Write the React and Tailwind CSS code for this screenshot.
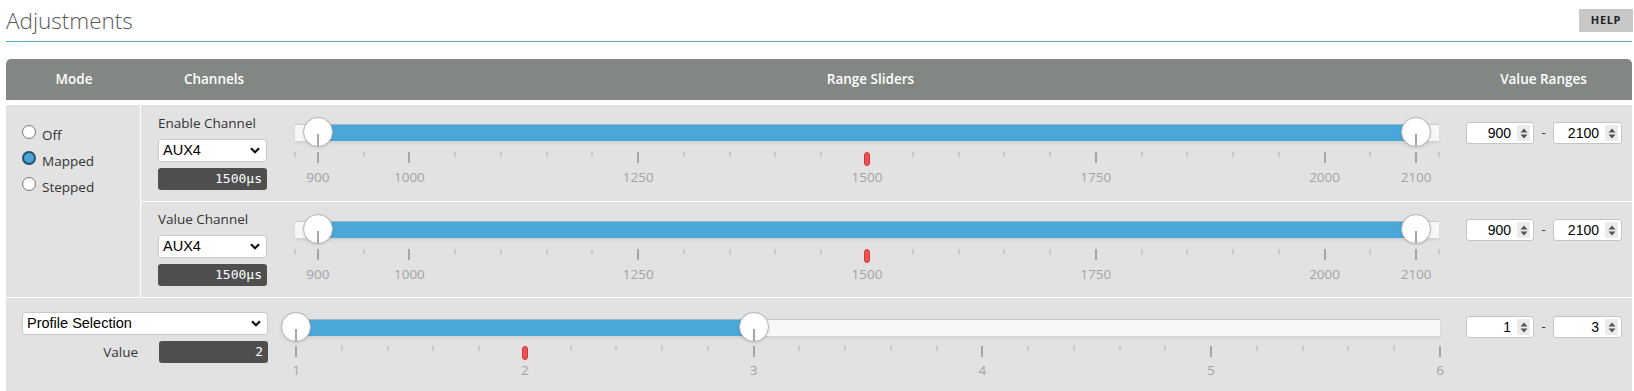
import React from 'react'

function range(n, f) {
  return Array.from({ length: n }, (_, i) => f(i))
}

// pulse-range slider, 875..2125 with pips every 50
const pulseTicks = [875, ...range(25, i => 900 + i * 50), 2125].map(v => ({
  v,
  major: [900, 1000, 1250, 1500, 1750, 2000, 2100].includes(v),
}))
const pulseLabels = [900, 1000, 1250, 1500, 1750, 2000, 2100]

const profileTicks = range(26, i => ({ v: 1 + i * 0.2, major: i % 5 === 0 }))
const profileLabels = [1, 2, 3, 4, 5, 6]

function Chevron() {
  return (
    <svg width="10" height="7" viewBox="0 0 10 7" className="shrink-0">
      <path d="M1 1.2 L5 5.2 L9 1.2" fill="none" stroke="#111" strokeWidth="2.2" />
    </svg>
  )
}

function Select({ value, width }) {
  return (
    <div
      className={`${width} h-[23px] bg-white border border-[#c8c8c8] rounded-[3px] flex items-center justify-between pl-[4px] pr-[6px] text-[14.5px] text-black font-['Liberation_Sans',Arial,sans-serif]`}
    >
      <span>{value}</span>
      <Chevron />
    </div>
  )
}

function ValueBox({ children }) {
  return (
    <div className="w-[109px] h-[22px] bg-[#4f4f4f] rounded-[3px] flex items-center justify-end pr-[5px] text-white text-[13px] font-['DejaVu_Sans_Mono','Liberation_Mono',monospace]">
      {children}
    </div>
  )
}

function NumberInput({ value, width }) {
  return (
    <div
      className={`${width} h-[22px] bg-white border border-[#c4c4c4] rounded-[3px] flex items-center justify-end pr-[3px] text-[14px] text-black font-['Liberation_Sans',Arial,sans-serif]`}
    >
      <span>{value}</span>
      <div className="ml-[6px] w-[13px] h-[16px] bg-[#ebebeb] flex items-center justify-center">
        <svg width="8" height="11" viewBox="0 0 8 11">
          <path d="M4 0.5 L7.5 4.5 L0.5 4.5 Z" fill="#555" />
          <path d="M4 10.5 L7.5 6.5 L0.5 6.5 Z" fill="#555" />
        </svg>
      </div>
    </div>
  )
}

function ValueRanges({ low, high, top }) {
  return (
    <div className={`w-[177px] pl-[11px] ${top} flex items-start`}>
      <div className="flex items-center">
        <NumberInput value={low} width="w-[68px]" />
        <span className="w-[19px] text-center text-[13px] text-[#333]">-</span>
        <NumberInput value={high} width="w-[69px]" />
      </div>
    </div>
  )
}

function Slider({ min, max, low, high, ticks, labels, marker, tickTop, labelTop }) {
  const pct = v => ((v - min) / (max - min)) * 100
  return (
    <div className="relative w-[1144px] h-[70px]">
      <div className="absolute left-0 right-0 top-0 h-[17px] bg-[#f7f7f7] border-t border-[#c9c9c9] shadow-[0_2px_3px_rgba(0,0,0,0.08)]" />
      <div
        className="absolute top-0 h-[17px] bg-[#4ba6d9] border-t border-[#9bb8c8]"
        style={{ left: `${pct(low)}%`, width: `${pct(high) - pct(low)}%` }}
      />
      {ticks.map(t =>
        Math.abs(t.v - marker) < 0.001 ? null : (
          <div
            key={t.v}
            className={`absolute ${tickTop} w-[2px] -ml-[1px] ${t.major ? 'h-[11px] bg-[#a6a6a6]' : 'h-[5px] bg-[#c9c9c9]'}`}
            style={{ left: `${pct(t.v)}%` }}
          />
        )
      )}
      <div
        className={`absolute ${tickTop} w-[6px] h-[14px] -ml-[3px] rounded-full bg-[#ec5050] border border-[#d43c3c]`}
        style={{ left: `${pct(marker)}%` }}
      />
      {labels.map(l => (
        <div
          key={l}
          className={`absolute ${labelTop} -translate-x-1/2 text-[13.5px] leading-[16px] text-[#a3a3a3]`}
          style={{ left: `${pct(l)}%` }}
        >
          {l}
        </div>
      ))}
      {[low, high].map((v, i) => (
        <div
          key={i}
          className="absolute top-[-7px] w-[30px] h-[30px] -ml-[15px] rounded-full bg-white border border-[#b3b3b3] shadow-[0_1px_3px_rgba(0,0,0,0.12)]"
          style={{ left: `${pct(v)}%` }}
        >
          <div className="absolute left-1/2 -ml-[1px] bottom-0 w-[2px] h-[12px] bg-[#a6a6a6]" />
        </div>
      ))}
    </div>
  )
}

function Radio({ label, checked }) {
  return (
    <div className="flex items-center h-[26px]">
      {checked ? (
        <div className="w-[14px] h-[14px] mb-[6px] rounded-full bg-[#4aa3d6] border-2 border-[#264f6b]" />
      ) : (
        <div className="w-[14px] h-[14px] mb-[6px] rounded-full bg-white border border-[#767676]" />
      )}
      <span className="ml-[6px] text-[13.5px] text-[#333]">{label}</span>
    </div>
  )
}

function ChannelRow({ label, top, border }) {
  return (
    <div className={`flex ${border}`}>
      <div className={`w-[144px] pl-[17px] ${top} flex flex-col`}>
        <div className="h-[18px] leading-[18px] text-[13.5px] text-[#333]">{label}</div>
        <div className="mt-[7px]">
          <Select value="AUX4" width="w-[109px]" />
        </div>
        <div className="mt-[6px]">
          <ValueBox>1500µs</ValueBox>
        </div>
      </div>
      <div className="flex-1 pl-[10px] pt-[19px]">
        <Slider
          min={875}
          max={2125}
          low={900}
          high={2100}
          ticks={pulseTicks}
          labels={pulseLabels}
          marker={1500}
          tickTop="top-[28px]"
          labelTop="top-[45px]"
        />
      </div>
      <ValueRanges low={900} high={2100} top="pt-[17px]" />
    </div>
  )
}

export default function App() {
  return (
    <div className="w-[1634px] h-[391px] overflow-hidden bg-white pl-[6px] pr-[2px] font-['Open_Sans','Liberation_Sans',sans-serif]">
      {/* Title */}
      <div className="h-[42px] border-b border-[#5aa9d1] flex items-start justify-between">
        <h1 className="pt-[4px] leading-[33px] text-[22.5px] font-light text-[#5a5a5a]">
          Adjustments
        </h1>
        <button className="mt-[9px] -mr-[1px] w-[54px] h-[23px] bg-[#c8c8c8] text-[11px] font-bold tracking-[0.06em] text-[#222]">
          HELP
        </button>
      </div>

      {/* Table header */}
      <div className="mt-[17px] h-[41px] rounded-t-[5px] bg-[#828784] flex items-center text-white text-[13.5px] font-semibold">
        <div className="w-[136px] text-center">Mode</div>
        <div className="w-[144px] text-center">Channels</div>
        <div className="flex-1 text-center">Range Sliders</div>
        <div className="w-[177px] text-center">Value Ranges</div>
      </div>

      {/* Body */}
      <div className="mt-[5px] bg-[#e2e2e2]">
        <div className="flex border-b border-white">
          <div className="w-[135px] border-r border-white pl-[16px] pt-[17px]">
            <Radio label="Off" />
            <Radio label="Mapped" checked />
            <Radio label="Stepped" />
          </div>
          <div className="flex-1 flex flex-col">
            <ChannelRow label="Enable Channel" top="pt-[9px]" border="h-[97px] border-b border-white" />
            <ChannelRow label="Value Channel" top="pt-[8px]" border="h-[95px]" />
          </div>
        </div>

        <div className="flex h-[100px]">
          <div className="w-[280px] pl-[16px] pt-[14px]">
            <Select value="Profile Selection" width="w-[246px]" />
            <div className="mt-[6px] flex items-center">
              <div className="w-[116px] text-right text-[13.5px] text-[#333]">Value</div>
              <div className="ml-[21px]">
                <ValueBox>2</ValueBox>
              </div>
            </div>
          </div>
          <div className="flex-1 pl-[10px] pt-[21px]">
            <Slider
              min={1}
              max={6}
              low={1}
              high={3}
              ticks={profileTicks}
              labels={profileLabels}
              marker={2}
              tickTop="top-[27px]"
              labelTop="top-[43px]"
            />
          </div>
          <ValueRanges low={1} high={3} top="pt-[18px]" />
        </div>
      </div>
    </div>
  )
}
